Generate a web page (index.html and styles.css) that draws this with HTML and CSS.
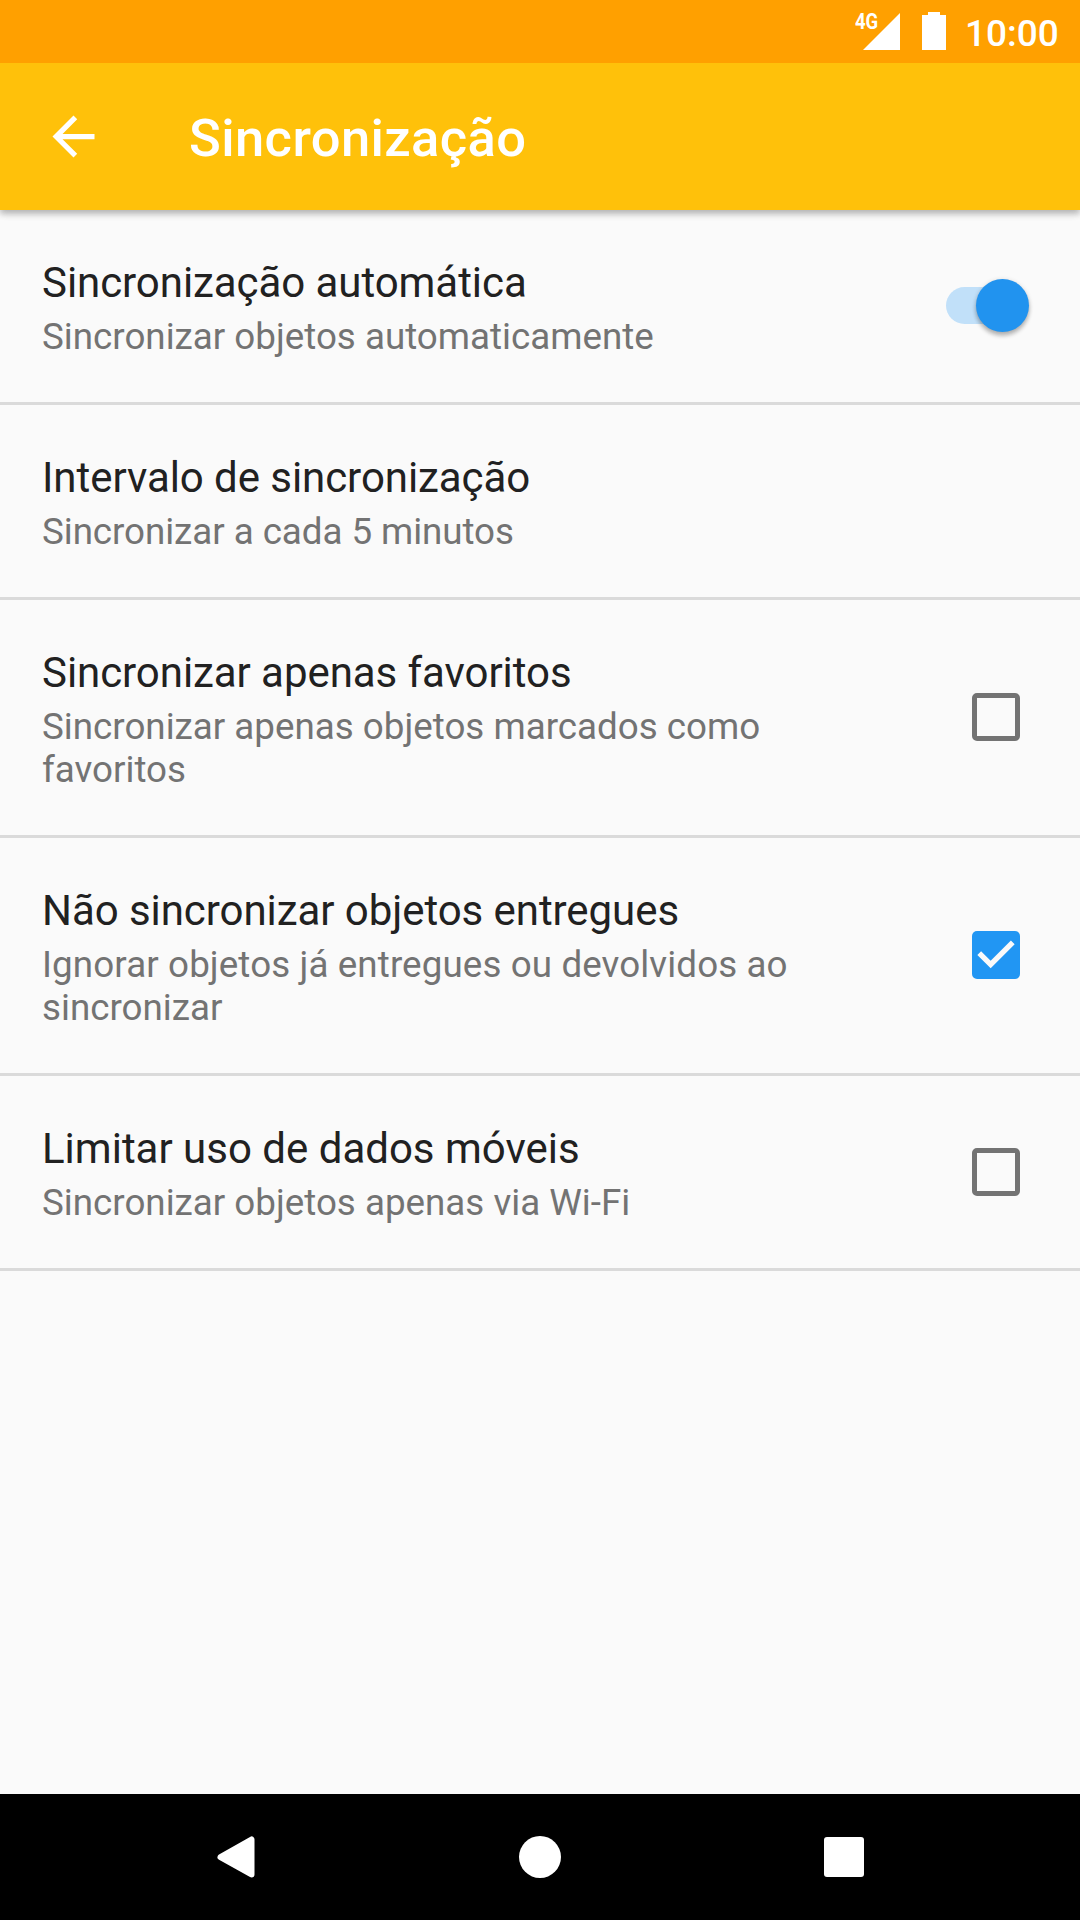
FILE: index.html
```html
<!DOCTYPE html>
<html lang="pt-BR">
<head>
<meta charset="utf-8">
<title>Sincronização</title>
<link rel="stylesheet" href="styles.css">
</head>
<body>
<div class="screen">
  <div class="status-bar">
    <div class="signal">
      <svg width="37" height="37" viewBox="0 0 37 37"><path d="M0 37L37 0V37Z" fill="#fff"/></svg>
      <span class="network">4G</span>
    </div>
    <svg class="battery" width="24" height="38" viewBox="0 0 24 38"><path d="M6 0H18V3H24V38H0V3H6Z" fill="#fff"/></svg>
    <span class="clock">10:00</span>
  </div>
  <header class="app-bar">
    <svg class="back" width="63" height="63" viewBox="0 0 24 24"><path d="M20 11H7.83l5.59-5.59L12 4l-8 8 8 8 1.41-1.41L7.83 13H20v-2z" fill="#fff"/></svg>
    <h1 class="app-title">Sincronização</h1>
  </header>
  <main class="preferences">
    <div class="row">
      <div class="texts">
        <div class="title tight">Sincronização automática</div>
        <div class="summary">Sincronizar objetos automaticamente</div>
      </div>
      <div class="switch"><div class="thumb"></div></div>
    </div>
    <div class="row">
      <div class="texts">
        <div class="title tight">Intervalo de sincronização</div>
        <div class="summary tight">Sincronizar a cada 5 minutos</div>
      </div>
    </div>
    <div class="row">
      <div class="texts">
        <div class="title tight">Sincronizar apenas favoritos</div>
        <div class="summary">Sincronizar apenas objetos marcados como<br>favoritos</div>
      </div>
      <div class="checkbox"></div>
    </div>
    <div class="row">
      <div class="texts">
        <div class="title tight">Não sincronizar objetos entregues</div>
        <div class="summary"><span class="loose">Ignorar objetos já entregues ou devolvidos ao</span><br>sincronizar</div>
      </div>
      <div class="checkbox checked">
        <svg width="48" height="48" viewBox="3 3 18 18"><path d="M10 17l-5-5 1.41-1.41L10 14.17l7.59-7.59L19 8l-9 9z" fill="#fafafa"/></svg>
      </div>
    </div>
    <div class="row">
      <div class="texts">
        <div class="title">Limitar uso de dados móveis</div>
        <div class="summary">Sincronizar objetos apenas via Wi-Fi</div>
      </div>
      <div class="checkbox"></div>
    </div>
  </main>
  <nav class="nav-bar">
    <svg width="38" height="42" viewBox="0 0 38 42"><path d="M3.5 21.2L34.5 3.5V38.5Z" fill="#fff" stroke="#fff" stroke-width="6" stroke-linejoin="round"/></svg>
    <div class="home"></div>
    <div class="recents"></div>
  </nav>
</div>
</body>
</html>
```
FILE: styles.css
```css
* {
  box-sizing: border-box;
}

body {
  margin: 0;
  font-family: Roboto, sans-serif;
}

svg {
  display: block;
  flex: none;
}

.screen {
  display: flex;
  flex-direction: column;
  width: 1080px;
  height: 1920px;
  background: #fafafa;
}

.status-bar {
  position: relative;
  z-index: 1;
  display: flex;
  justify-content: flex-end;
  height: 63px;
  padding: 12px 22px 0 0;
  background: #ffa000;
  color: #fff;
}

.signal {
  position: relative;
  padding-top: 1px;
}

.network {
  position: absolute;
  left: -8px;
  top: -3px;
  font: bold 22px/26px Roboto, sans-serif;
  transform: scaleX(.84);
  transform-origin: left;
}

.battery {
  margin: 0 19px 0 22px;
}

.clock {
  width: 93px;
  font-size: 37px;
  font-weight: 500;
  line-height: 43px;
  white-space: nowrap;
}

.app-bar {
  display: flex;
  align-items: center;
  gap: 84px;
  height: 147px;
  padding-left: 42px;
  background: #ffc10a;
  box-shadow: 0 4px 6px rgba(0, 0, 0, .22), 0 1px 10px rgba(0, 0, 0, .12);
}

.app-title {
  margin: 3px 0 0;
  color: #fff;
  font-size: 52.5px;
  font-weight: 500;
  line-height: 62px;
  letter-spacing: .4px;
}

.preferences {
  flex: 1;
}

.row {
  display: flex;
  align-items: center;
  justify-content: space-between;
  padding: 48px 60px 44px 42px;
  border-bottom: 3px solid #dadada;
}

.title {
  color: #212121;
  font-size: 42px;
  line-height: 49px;
}

.summary {
  margin-top: 8px;
  color: #737373;
  font-size: 36.75px;
  line-height: 43px;
}

.tight {
  letter-spacing: -.06px;
}

.loose {
  letter-spacing: .11px;
}

.switch {
  display: flex;
  align-items: center;
  justify-content: flex-end;
  width: 74px;
  height: 37px;
  margin-bottom: 5px;
  border-radius: 19px;
  background: #c1e0f9;
}

.thumb {
  flex: none;
  width: 53px;
  height: 53px;
  margin-right: -9px;
  border-radius: 50%;
  background: #2193ef;
  box-shadow: 0 4px 4px rgba(0, 0, 0, .22), 0 1px 5px rgba(0, 0, 0, .16);
}

.checkbox {
  width: 48px;
  height: 48px;
  margin-bottom: 5px;
  border: 5px solid #737373;
  border-radius: 5px;
}

.checked {
  border: 0;
  background: #2196f3;
}

.nav-bar {
  display: flex;
  align-items: center;
  justify-content: space-between;
  height: 126px;
  padding: 0 216px 0 217px;
  background: #000;
}

.home {
  width: 42px;
  height: 42px;
  border-radius: 50%;
  background: #fff;
}

.recents {
  width: 40px;
  height: 40px;
  border-radius: 3px;
  background: #fff;
}
```
